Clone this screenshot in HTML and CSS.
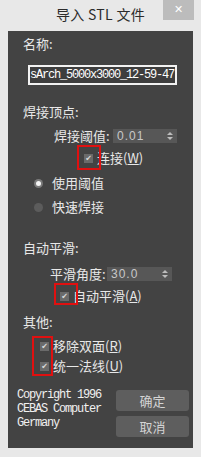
FILE: index.html
```html
<!DOCTYPE html>
<html lang="zh">
<head>
<meta charset="utf-8">
<link rel="stylesheet" href="styles.css">
</head>
<body>
<div class="dialog">
  <div class="titlebar">
    <span></span>
    <span class="title">导入 STL 文件</span>
    <span class="close">✕</span>
  </div>
  <div class="panel">
    <div class="label l-name">名称:</div>
    <div class="input">sArch_5000x3000_12-59-47</div>
    <div class="label l-weld">焊接顶点:</div>
    <div class="row r-thresh">
      <span class="rowlabel">焊接阈值:</span>
      <span class="spinner s1"><span class="val">0.01</span><span class="arrows"><i class="up"></i><i class="down"></i></span></span>
    </div>
    <div class="check c-weld"><span class="box">✔</span><span>连接(<u>W</u>)</span></div>
    <div class="radio rd1"><span class="dot on"></span><span>使用阈值</span></div>
    <div class="radio rd2"><span class="dot"></span><span>快速焊接</span></div>
    <div class="label l-smooth">自动平滑:</div>
    <div class="row r-angle">
      <span class="rowlabel">平滑角度:</span>
      <span class="spinner s2"><span class="val">30.0</span><span class="arrows"><i class="up"></i><i class="down"></i></span></span>
    </div>
    <div class="check c-smooth"><span class="box">✔</span><span>自动平滑(<u>A</u>)</span></div>
    <div class="label l-other">其他:</div>
    <div class="check c-remove"><span class="box">✔</span><span>移除双面(<u>R</u>)</span></div>
    <div class="check c-unify"><span class="box">✔</span><span>统一法线(<u>U</u>)</span></div>
    <div class="bottom">
      <div class="copyright">Copyright 1996<br>CEBAS Computer<br>Germany</div>
      <div class="buttons">
        <div class="btn">确定</div>
        <div class="btn">取消</div>
      </div>
    </div>
    <div class="mark m1"></div>
    <div class="mark m2"></div>
    <div class="mark m3"></div>
  </div>
</div>
</body>
</html>
```
FILE: styles.css
```css
html, body {
  margin: 0;
  padding: 0;
}
body {
  width: 201px;
  height: 457px;
  background: #e8e8e8;
  font-family: "Noto Sans CJK SC", "Noto Sans", sans-serif;
  overflow: hidden;
}
.dialog {
  width: 201px;
  height: 457px;
  display: flex;
  flex-direction: column;
}
.titlebar {
  height: 31px;
  display: grid;
  grid-template-columns: 1fr auto 1fr;
  align-items: start;
}
.title {
  font-size: 14px;
  line-height: 28px;
  color: #2b2b2b;
  letter-spacing: 0.3px;
}
.close {
  justify-self: end;
  margin-right: 7px;
  width: 31px;
  height: 20px;
  background: #bcbcbc;
  color: #fff;
  font-size: 11px;
  font-weight: bold;
  line-height: 20px;
  text-align: center;
  font-family: "DejaVu Sans", sans-serif;
}
.panel {
  position: relative;
  margin: 0 8px;
  height: 417px;
  background: #434343;
  display: flex;
  flex-direction: column;
  color: #e8e8e8;
  font-size: 13px;
}
.label {
  height: 16px;
  line-height: 16px;
  padding-left: 15px;
}
.l-name { margin-top: 5px; }
.input {
  margin-top: 13px;
  margin-left: 20px;
  width: 149px;
  height: 20px;
  box-sizing: border-box;
  border: 2px solid #f2f2f2;
  background: #3e3e3e;
  color: #fff;
  font-family: "Liberation Mono", monospace;
  font-size: 12px;
  letter-spacing: -1.2px;
  line-height: 16px;
  padding-left: 0;
  white-space: nowrap;
  overflow: hidden;
}
.l-weld { margin-top: 19px; }
.row {
  height: 16px;
  display: flex;
  align-items: center;
}
.rowlabel {
  line-height: 16px;
}
.r-thresh { margin-top: 8px; padding-left: 46px; }
.r-angle { margin-top: 10px; padding-left: 42px; }
.spinner {
  margin-left: auto;
  height: 14px;
  background: #575757;
  display: flex;
  align-items: center;
  justify-content: space-between;
  box-sizing: border-box;
  padding: 0 4px 0 4px;
}
.s1 { width: 64px; margin-right: 16px; }
.s2 { width: 65px; margin-right: 21px; }
.val {
  font-family: "Liberation Sans", sans-serif;
  font-size: 12px;
  color: #c8c8c8;
  letter-spacing: 1px;
}
.arrows {
  display: flex;
  flex-direction: column;
  gap: 2px;
}
.arrows i {
  width: 0;
  height: 0;
  border-left: 3px solid transparent;
  border-right: 3px solid transparent;
}
.arrows .up { border-bottom: 3px solid #bdbdbd; }
.arrows .down { border-top: 3px solid #bdbdbd; }
.check, .radio {
  height: 16px;
  line-height: 16px;
  display: flex;
  align-items: center;
}
.box {
  width: 9px;
  height: 9px;
  background: #6a6a6a;
  color: #d8d8d8;
  font-size: 8px;
  line-height: 9px;
  text-align: center;
  margin-right: 4px;
  font-family: "DejaVu Sans", sans-serif;
}
.check u { text-underline-offset: 1px; }
.c-weld { margin-top: 6px; padding-left: 76px; }
.c-smooth { margin-top: 6px; padding-left: 52px; }
.c-remove { margin-top: 8px; padding-left: 32px; }
.c-unify { margin-top: 4px; padding-left: 32px; }
.radio { padding-left: 26px; }
.rd1 { margin-top: 9px; }
.rd2 { margin-top: 8px; }
.dot {
  width: 9px;
  height: 9px;
  border-radius: 50%;
  background: #5c5c5c;
  margin-right: 9px;
  display: flex;
  align-items: center;
  justify-content: center;
}
.dot.on { background: #7a7a7a; }
.dot.on::after {
  content: "";
  width: 5px;
  height: 5px;
  border-radius: 50%;
  background: #f4f4f4;
}
.l-smooth { margin-top: 25px; }
.l-other { margin-top: 10px; }
.bottom {
  margin-top: 14px;
  display: flex;
  justify-content: space-between;
  padding-left: 9px;
  padding-right: 4px;
}
.copyright {
  font-family: "Liberation Mono", monospace;
  font-size: 12px;
  letter-spacing: -1.2px;
  line-height: 14px;
  color: #f0f0f0;
}
.buttons {
  margin-top: 2px;
  display: flex;
  flex-direction: column;
  gap: 5px;
}
.btn {
  width: 73px;
  height: 21px;
  background: #5e5e5e;
  border-radius: 3px;
  color: #d4d4d4;
  font-size: 13px;
  line-height: 21px;
  text-align: center;
}
.mark {
  position: absolute;
  border: 2px solid #e01010;
  box-sizing: border-box;
}
.m1 { left: 69px; top: 114px; width: 24px; height: 25px; }
.m2 { left: 46px; top: 252px; width: 24px; height: 22px; }
.m3 { left: 24px; top: 305px; width: 21px; height: 40px; }
```
